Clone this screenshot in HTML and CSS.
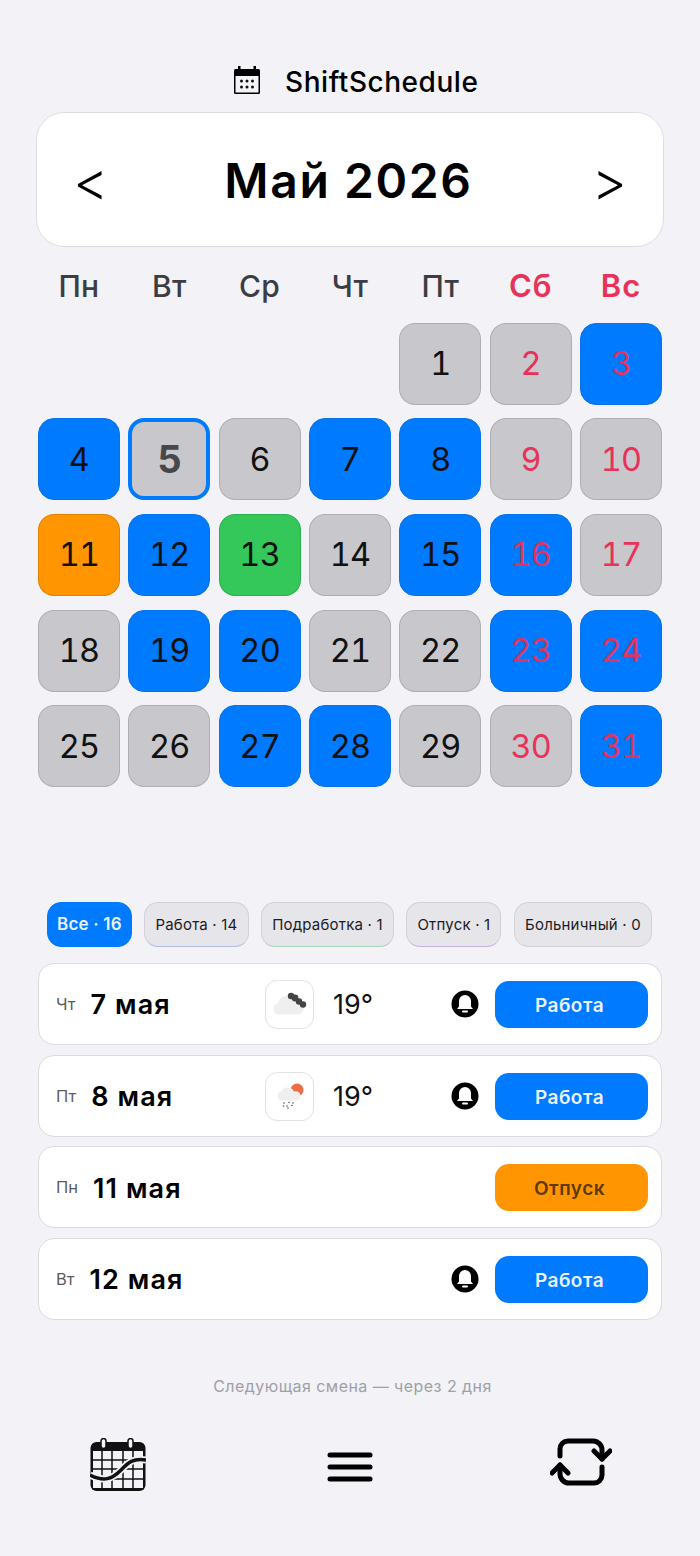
FILE: index.html
```html
<!DOCTYPE html>
<html lang="ru">
<head>
<meta charset="utf-8">
<title>ShiftSchedule</title>
<link rel="stylesheet" href="styles.css">
</head>
<body>
<div class="app">
  <header class="brand">
    <svg class="brand-icon" viewBox="0 0 26 28" width="26" height="28"><path fill="#000" d="M4 0h2.500v3h13V0H22v3h2.500A1.500 1.500 0 0 1 26 4.500v22a1.500 1.500 0 0 1-1.500 1.500h-23A1.500 1.500 0 0 1 0 26.500v-22A1.500 1.500 0 0 1 1.500 3H4z"/><rect x="1.500" y="10" width="23" height="16.500" fill="#f4f4f6"/><g fill="#111"><circle cx="7.500" cy="15" r="1.500"/><circle cx="13" cy="15" r="1.500"/><circle cx="18.500" cy="15" r="1.500"/><circle cx="7.500" cy="21" r="1.500"/><circle cx="13" cy="21" r="1.500"/><circle cx="18.500" cy="21" r="1.500"/></g></svg>
    <span class="brand-name">ShiftSchedule</span>
  </header>

  <section class="month-card">
    <span class="arrow">&lt;</span>
    <h1 class="month-title">Май 2026</h1>
    <span class="arrow">&gt;</span>
  </section>

  <div class="weekdays">
    <span>Пн</span><span>Вт</span><span>Ср</span><span>Чт</span><span>Пт</span><span class="red">Сб</span><span class="red">Вс</span>
  </div>

  <div class="grid">
    <span class="blank"></span><span class="blank"></span><span class="blank"></span><span class="blank"></span>
    <span class="day grey">1</span><span class="day grey red">2</span><span class="day blue red">3</span>
    <span class="day blue">4</span><span class="day grey today">5</span><span class="day grey">6</span><span class="day blue">7</span><span class="day blue">8</span><span class="day grey red">9</span><span class="day grey red">10</span>
    <span class="day orange">11</span><span class="day blue">12</span><span class="day green">13</span><span class="day grey">14</span><span class="day blue">15</span><span class="day blue red">16</span><span class="day grey red">17</span>
    <span class="day grey">18</span><span class="day blue">19</span><span class="day blue">20</span><span class="day grey">21</span><span class="day grey">22</span><span class="day blue red">23</span><span class="day blue red">24</span>
    <span class="day grey">25</span><span class="day grey">26</span><span class="day blue">27</span><span class="day blue">28</span><span class="day grey">29</span><span class="day grey red">30</span><span class="day blue red">31</span>
  </div>

  <div class="chips">
    <span class="chip active">Все · 16</span>
    <span class="chip tint-blue">Работа · 14</span>
    <span class="chip tint-green">Подработка · 1</span>
    <span class="chip tint-purple">Отпуск · 1</span>
    <span class="chip">Больничный · 0</span>
  </div>

  <div class="rows">
    <article class="row">
      <div class="when"><span class="dow">Чт</span><span class="date">7 мая</span></div>
      <span class="wx"><svg viewBox="0 0 46 46" width="46" height="46"><path fill="#efefef" d="M12 33.500a5.500 5.500 0 0 1-1-10.900A9 9 0 0 1 28 20a6.800 6.800 0 0 1 4 13.500z"/><g fill="#444"><circle cx="24" cy="15" r="3.200"/><circle cx="28" cy="17" r="3.400"/><circle cx="32" cy="20.500" r="3.200"/><circle cx="36" cy="23.500" r="3.200"/></g></svg></span>
      <span class="temp">19°</span>
      <svg class="bell" viewBox="0 0 28 28" width="28" height="28"><circle cx="14" cy="14" r="13.500" fill="#000"/><path fill="#fff" d="M14 5a6 6 0 0 1 6 6v5.500l2 2.500H6l2-2.500V11a6 6 0 0 1 6-6z"/><rect x="11" y="20.500" width="6" height="2" rx="1" fill="#fff"/></svg>
      <span class="badge work">Работа</span>
    </article>
    <article class="row">
      <div class="when"><span class="dow">Пт</span><span class="date">8 мая</span></div>
      <span class="wx"><svg viewBox="0 0 46 46" width="46" height="46"><circle cx="30" cy="17" r="6.500" fill="#ee6c45"/><path fill="#efefef" d="M15 27.500a4.500 4.500 0 0 1-.8-8.900A7 7 0 0 1 27 18.500a4.800 4.800 0 0 1 3.500 9z"/><g fill="#555"><circle cx="17" cy="30" r=".8"/><circle cx="22" cy="29.500" r=".8"/><circle cx="26" cy="30" r=".8"/><circle cx="16.500" cy="33" r=".8"/><circle cx="20" cy="33" r=".8"/><circle cx="25" cy="32.500" r=".8"/><circle cx="21" cy="35" r=".8"/></g></svg></span>
      <span class="temp">19°</span>
      <svg class="bell" viewBox="0 0 28 28" width="28" height="28"><circle cx="14" cy="14" r="13.500" fill="#000"/><path fill="#fff" d="M14 5a6 6 0 0 1 6 6v5.500l2 2.500H6l2-2.500V11a6 6 0 0 1 6-6z"/><rect x="11" y="20.500" width="6" height="2" rx="1" fill="#fff"/></svg>
      <span class="badge work">Работа</span>
    </article>
    <article class="row">
      <div class="when"><span class="dow">Пн</span><span class="date">11 мая</span></div>
      <span class="badge vacation">Отпуск</span>
    </article>
    <article class="row">
      <div class="when"><span class="dow">Вт</span><span class="date">12 мая</span></div>
      <svg class="bell" viewBox="0 0 28 28" width="28" height="28"><circle cx="14" cy="14" r="13.500" fill="#000"/><path fill="#fff" d="M14 5a6 6 0 0 1 6 6v5.500l2 2.500H6l2-2.500V11a6 6 0 0 1 6-6z"/><rect x="11" y="20.500" width="6" height="2" rx="1" fill="#fff"/></svg>
      <span class="badge work">Работа</span>
    </article>
  </div>

  <p class="next">Следующая смена — через 2 дня</p>

  <nav class="tabs">
    <svg class="tab-cal" viewBox="0 0 56 54" width="56" height="54">
      <rect x="0.500" y="4" width="55" height="49" rx="6" fill="#111"/>
      <rect x="3" y="13" width="50" height="37" fill="#f2f2f7"/>
      <g stroke="#111" stroke-width="1.500"><path d="M12 13v37M22 13v37M33 13v37M43 13v37M3 22h50M3 31h50M3 41h50"/></g>
      <path d="M0 37c14 7 22 4 30-4s12-13 26-11" fill="none" stroke="#f2f2f7" stroke-width="7"/>
      <path d="M0 37c14 7 22 4 30-4s12-13 26-11" fill="none" stroke="#111" stroke-width="3.500"/>
      <rect x="11" y="0.500" width="5" height="10" rx="2.500" fill="#f2f2f7" stroke="#111" stroke-width="1.500"/>
      <rect x="38" y="0.500" width="5" height="10" rx="2.500" fill="#f2f2f7" stroke="#111" stroke-width="1.500"/>
    </svg>
    <svg class="tab-menu" viewBox="0 0 46 30" width="46" height="30"><g stroke="#000" stroke-width="5" stroke-linecap="round"><path d="M3 3h40M3 15h40M3 27h40"/></g></svg>
    <svg class="tab-repeat" viewBox="0 0 62 48" width="62" height="48"><g fill="none" stroke="#000" stroke-width="5" stroke-linecap="round" stroke-linejoin="round"><path d="M10 18v-7a8 8 0 0 1 8-8h25a9 9 0 0 1 9 9v9"/><path d="M44 13l8 8 8-8"/><path d="M52 29v8a8 8 0 0 1-8 8H19a9 9 0 0 1-9-9v-9"/><path d="M2 35l8-8 8 8"/></g></svg>
  </nav>
</div>
</body>
</html>
```

FILE: styles.css
```css
* { box-sizing: border-box; }
html, body { margin: 0; padding: 0; }
body {
  background: #f2f2f7;
  color: #000;
  font-family: Inter, "Noto Sans", sans-serif;
}
.app {
  width: 700px;
  height: 1556px;
  overflow: hidden;
  padding-top: 66px;
}
.brand {
  height: 46px;
  display: flex;
  align-items: flex-start;
  justify-content: flex-start;
  padding-left: 234px;
}
.brand-name {
  margin-left: 25px;
  font-size: 28px;
  font-weight: 500;
  line-height: 32px;
  letter-spacing: 0.55px;
}
.month-card {
  margin: 0 36px;
  height: 135px;
  background: #fff;
  border: 1.500px solid #dedee2;
  border-radius: 28px;
  display: flex;
  align-items: center;
  justify-content: space-between;
  padding: 0 36px;
}
.arrow { font-size: 54px; font-weight: 300; line-height: 56px; padding-top: 5px; }
.month-title {
  margin: 0;
  padding: 2px 3px 0 0;
  font-size: 48px;
  font-weight: 600;
  letter-spacing: 1.600px;
  line-height: 56px;
}
.weekdays {
  margin: 20px 38px 0;
  height: 38px;
  display: grid;
  grid-template-columns: repeat(7, 1fr);
  column-gap: 8.400px;
  text-align: center;
  font-size: 30px;
  font-weight: 500;
  line-height: 38px;
  letter-spacing: 0.3px;
  color: #3c3c43;
}
.weekdays .red { color: #e8325a; font-weight: 600; font-size: 31px; letter-spacing: 1px; }
.grid {
  margin: 17.600px 38px 0;
  display: grid;
  grid-template-columns: repeat(7, 1fr);
  grid-auto-rows: 82px;
  gap: 13.700px 8.400px;
}
.day {
  display: flex;
  align-items: center;
  justify-content: center;
  border-radius: 16px;
  border: 1px solid rgba(0, 0, 0, 0.12);
  font-size: 32.500px;
  font-weight: 370;
  font-variant-numeric: tabular-nums;
  letter-spacing: -0.8px;
  color: #111;
}
.day.red { color: #e8325a; }
.day.blue.red { color: #dc3563; }
.grey { background: #c7c7cc; }
.blue { background: #007aff; border-color: #0a72e8; }
.orange { background: #ff9500; }
.green { background: #34c759; }
.today {
  border: 4px solid #007aff;
  color: #48484a;
  font-size: 38px;
  font-weight: 700;
}
.chips {
  margin: 114.600px 48px 0 47px;
  height: 45px;
  display: flex;
  justify-content: space-between;
}
.chip {
  display: flex;
  align-items: center;
  padding: 0 10px;
  background: #e5e5ea;
  border: 1.500px solid #d1d1d6;
  border-radius: 14px;
  font-size: 15px;
  letter-spacing: 0.2px;
  color: #1c1c1e;
  white-space: nowrap;
}
.chip.active {
  padding: 0 9px;
  background: #007aff;
  border-color: #007aff;
  color: #e8f2ff;
  font-weight: 600;
  font-size: 17px;
}
.tint-blue { border-bottom-color: #aebfe0; }
.tint-green { border-bottom-color: #a8d4bc; }
.tint-purple { border-bottom-color: #c9b5dc; }
.rows {
  margin: 16px 38px 0;
  display: flex;
  flex-direction: column;
  gap: 9.600px;
}
.row {
  height: 82px;
  background: #fff;
  border: 1.500px solid #dcdce0;
  border-radius: 16px;
  display: flex;
  align-items: center;
  padding: 0 13px 0 17px;
}
.when {
  display: flex;
  align-items: center;
  gap: 15px;
  width: 209px;
  flex: none;
}
.dow { font-size: 16.500px; color: #5c5c60; }
.date { font-size: 27px; font-weight: 600; letter-spacing: 1.100px; padding-top: 2px; }
.wx {
  width: 49px;
  height: 49px;
  margin-top: 1px;
  flex: none;
  display: flex;
  align-items: center;
  justify-content: center;
  background: #fff;
  border: 1.500px solid #e2e2e4;
  border-radius: 12px;
}
.temp {
  margin-left: 19px;
  padding-top: 2px;
  font-size: 27px;
  font-weight: 400;
  color: #111;
}
.bell { margin-left: auto; flex: none; }
.badge {
  width: 153px;
  height: 47px;
  margin-top: 1px;
  flex: none;
  display: flex;
  align-items: center;
  justify-content: center;
  border-radius: 14px;
  padding: 2px 4px 0 0;
  font-size: 19px;
  font-weight: 600;
  letter-spacing: 0.5px;
}
.bell + .badge { margin-left: 16px; }
.when + .badge { margin-left: auto; }
.work { background: #007aff; color: #eaf3ff; }
.vacation { background: #ff9500; color: #5e3a06; }
.next {
  margin: 56px 0 0;
  padding-left: 5px;
  text-align: center;
  font-size: 16px;
  line-height: 20px;
  color: #a0a0a6;
  letter-spacing: 0.45px;
}
.tabs {
  position: relative;
  margin-top: 42px;
  height: 56px;
  display: flex;
  align-items: flex-start;
  padding-left: 90px;
}
.tab-menu { margin-left: 181px; margin-top: 14px; }
.tab-repeat { margin-left: 177px; }
```
